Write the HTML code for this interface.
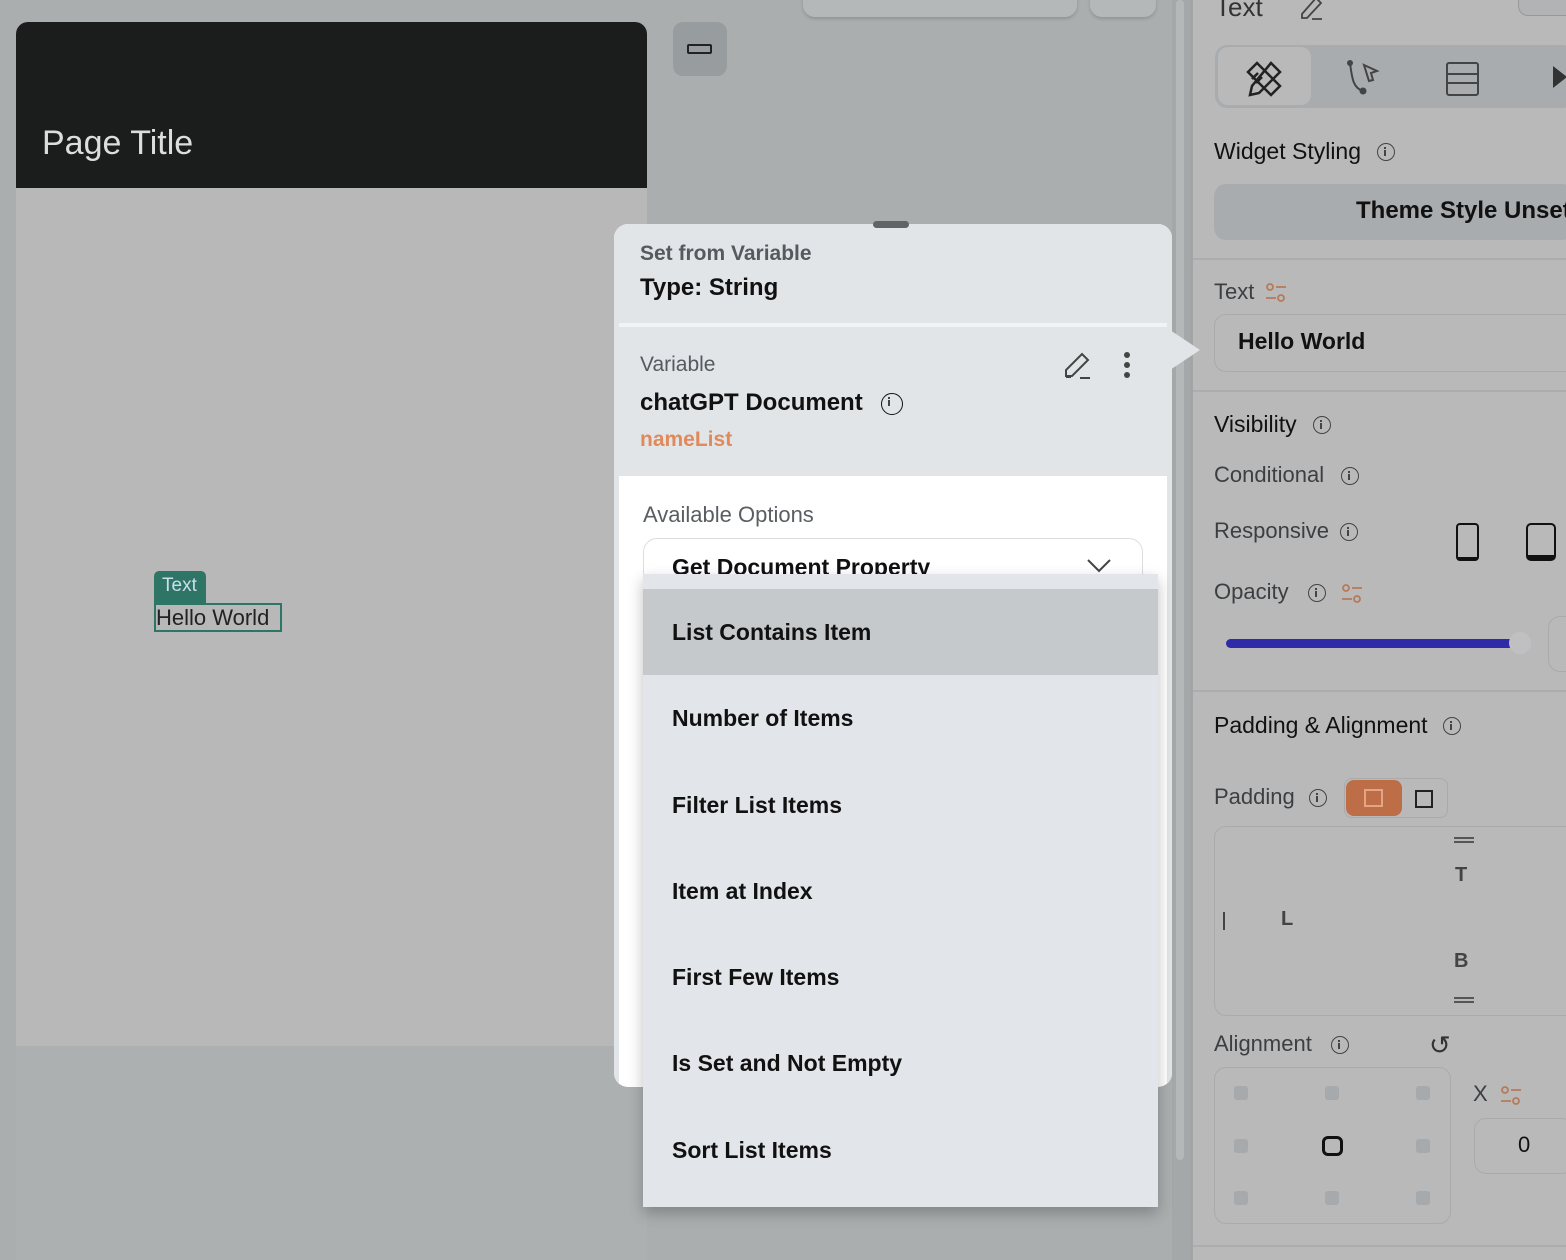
<!DOCTYPE html>
<html><head><meta charset="utf-8"><style>
*{box-sizing:border-box;margin:0;padding:0}
body{width:1566px;height:1260px;overflow:hidden;background:#abaeaf;font-family:"Liberation Sans",sans-serif;position:relative;color:#111}
.a{position:absolute}
.ic{width:18px;height:18px;border:1.8px solid #444;border-radius:50%;display:inline-block;position:absolute}
.ic::before{content:"";position:absolute;left:6px;top:6px;width:2px;height:6px;background:#444}
.ic::after{content:"";position:absolute;left:6px;top:2.5px;width:2px;height:2px;background:#444}
.sl{position:absolute;width:24px;height:24px}
.lbl{font-size:22px;color:#3c3f42}
.menu div{height:86.3px;padding-left:29px;line-height:86px;font-size:23px;font-weight:bold;color:#111}
.dot{width:14px;height:14px;background:#a6aaad;border-radius:3px;position:absolute}
</style></head><body>
<svg width="0" height="0" style="position:absolute"><defs><g id="sl"><circle cx="6" cy="6" r="3" stroke="#b77a58" stroke-width="1.8" fill="none"/><path d="M12 6 H22 M2 17 H12" stroke="#b77a58" stroke-width="1.8"/><circle cx="17" cy="17" r="3" stroke="#b77a58" stroke-width="1.8" fill="none"/></g></defs></svg>
<!-- phone -->
<div class="a" style="left:16px;top:22px;width:631px;height:1238px;background:#b8b8b8;border-radius:12px 12px 0 0;overflow:hidden">
 <div class="a" style="left:0;top:0;width:631px;height:166px;background:#1b1c1c"></div>
 <div class="a" style="left:26px;top:102px;font-size:34px;color:#ddd">Page Title</div>
 <div class="a" style="left:0;top:1024px;width:631px;height:220px;background:#adb0b1"></div>
</div>
<div class="a" style="left:154px;top:571px;width:52px;height:32px;background:#2f7565;border-radius:5px 5px 0 0;color:#cde;font-size:19px;padding:4px 0 0 8px">Text</div>
<div class="a" style="left:154px;top:603px;width:128px;height:29px;border:2px solid #2f7565;font-size:22px;line-height:25px;color:#222">Hello World</div>
<!-- toolbars -->
<div class="a" style="left:803px;top:-20px;width:274px;height:37px;background:#b5b8b9;border-radius:12px;box-shadow:0 2px 3px rgba(0,0,0,.15)"></div>
<div class="a" style="left:1090px;top:-20px;width:66px;height:37px;background:#b5b8b9;border-radius:12px;box-shadow:0 2px 3px rgba(0,0,0,.15)"></div>
<div class="a" style="left:673px;top:22px;width:54px;height:54px;background:#979c9f;border-radius:10px"><div class="a" style="left:14px;top:22px;width:25px;height:10px;border:2px solid #222;border-radius:2px"></div></div>
<!-- scroll strip -->
<div class="a" style="left:1172px;top:0;width:18px;height:1260px;background:#a5a8a9"></div>
<div class="a" style="left:1176px;top:0;width:8px;height:1160px;background:#b5b8b9;border-radius:4px"></div>
<!-- right panel -->
<div class="a" style="left:1190px;top:0;width:376px;height:1260px;background:#b9b9b9;border-left:3px solid #a2a4a5">
 <div class="a" style="left:22px;top:-8px;font-size:26px;color:#333">Text</div>
 <svg class="a" style="left:105px;top:-6px" width="28" height="28"><path d="M4 20 L18 4 L23 9 L9 24 L4 24 Z M14 25 H24" stroke="#444" stroke-width="1.8" fill="none"/></svg>
 <div class="a" style="left:325px;top:-10px;width:60px;height:26px;border:1px solid #999;border-radius:10px;background:#b1b3b4"></div>
 <div class="a" style="left:22px;top:45px;width:360px;height:63px;background:#a9acae;border-radius:12px"></div>
 <div class="a" style="left:25px;top:47px;width:93px;height:58px;background:#b9b9b9;border-radius:10px"></div>
 <svg class="a" style="left:52px;top:60px" width="38" height="38"><g stroke="#222" stroke-width="2.5" fill="none"><path d="M3 12 L12 3 L35 26 L26 35 Z"/><path d="M7 19 L13 13 M11 23 L17 17"/><path d="M26 3 L35 12 L14 33 L5 35 L7 26 Z"/></g></svg>
 <div class="a" style="left:253px;top:62px;width:33px;height:34px;border:2.5px solid #444;border-radius:3px"></div>
 <div class="a" style="left:253px;top:73px;width:33px;height:11px;border-top:2.5px solid #444;border-bottom:2.5px solid #444"></div>
 <svg class="a" style="left:150px;top:58px" width="40" height="40"><circle cx="7" cy="5" r="3" fill="#444"/><circle cx="20" cy="33" r="3.5" fill="#444"/><path d="M7 5 C9 20 10 30 20 33" stroke="#444" stroke-width="2" fill="none"/><path d="M21 7 L34 13 L28 15 L30 22 L26 23 Z" stroke="#444" stroke-width="2" fill="none"/></svg>
 <div class="a" style="left:360px;top:66px;border-left:14px solid #333;border-top:11px solid transparent;border-bottom:11px solid transparent"></div>
 <div class="a" style="left:21px;top:138px;font-size:23px;color:#111">Widget Styling</div><span class="ic" style="left:184px;top:143px"></span>
 <div class="a" style="left:21px;top:184px;width:360px;height:56px;background:#a9acae;border-radius:12px"></div>
 <div class="a" style="left:163px;top:197px;font-size:24px;font-weight:bold;white-space:nowrap">Theme Style Unset</div>
 <div class="a" style="left:0;top:258px;width:376px;height:2px;background:#abadae"></div>
 <div class="a lbl" style="left:21px;top:279px">Text</div>
 <svg class="sl" style="left:71px;top:281px"><use href="#sl"/></svg>
 <div class="a" style="left:21px;top:314px;width:370px;height:58px;border:1.5px solid #aaa;border-radius:12px"></div>
 <div class="a" style="left:45px;top:328px;font-size:23px;font-weight:bold">Hello World</div>
 <div class="a" style="left:0;top:390px;width:376px;height:2px;background:#abadae"></div>
 <div class="a" style="left:21px;top:411px;font-size:23px">Visibility</div><span class="ic" style="left:120px;top:416px"></span>
 <div class="a lbl" style="left:21px;top:462px">Conditional</div><span class="ic" style="left:148px;top:467px"></span>
 <div class="a lbl" style="left:21px;top:518px">Responsive</div><span class="ic" style="left:147px;top:523px"></span>
 <div class="a" style="left:263px;top:523px;width:23px;height:38px;border:2.5px solid #111;border-bottom-width:4px;border-radius:4px"></div>
 <div class="a" style="left:333px;top:523px;width:30px;height:38px;border:2.5px solid #111;border-bottom-width:6px;border-radius:5px"></div>
 <div class="a lbl" style="left:21px;top:579px">Opacity</div><span class="ic" style="left:115px;top:584px"></span>
 <svg class="sl" style="left:147px;top:582px"><use href="#sl"/></svg>
 <div class="a" style="left:33px;top:639px;width:290px;height:9px;background:#2e2aa8;border-radius:5px"></div>
 <div class="a" style="left:316px;top:632px;width:22px;height:22px;background:#c0c0c2;border-radius:50%"></div>
 <div class="a" style="left:355px;top:616px;width:40px;height:56px;border:1.5px solid #aaa;border-radius:12px"></div>
 <div class="a" style="left:0;top:690px;width:376px;height:2px;background:#abadae"></div>
 <div class="a" style="left:21px;top:712px;font-size:23px">Padding &amp; Alignment</div><span class="ic" style="left:250px;top:717px"></span>
 <div class="a lbl" style="left:21px;top:784px">Padding</div><span class="ic" style="left:116px;top:789px"></span>
 <div class="a" style="left:151px;top:778px;width:104px;height:40px;border:1.5px solid #aaa;border-radius:8px"></div>
 <div class="a" style="left:153px;top:780px;width:56px;height:36px;background:#bd6e47;border-radius:8px"><div class="a" style="left:18px;top:9px;width:19px;height:18px;border:2px solid #e3a586"></div></div>
 <div class="a" style="left:222px;top:790px;width:18px;height:18px;border:2px solid #222"></div>
 <div class="a" style="left:21px;top:826px;width:370px;height:190px;border:1.5px solid #aaa;border-radius:12px"></div>
 <div class="a" style="left:261px;top:837px;width:20px;height:6px;border-top:2px solid #555;border-bottom:2px solid #555"></div>
 <div class="a" style="left:262px;top:864px;font-size:20px;font-weight:bold;color:#444">T</div>
 <div class="a" style="left:88px;top:908px;font-size:20px;font-weight:bold;color:#444">L</div>
 <div class="a" style="left:30px;top:912px;width:8px;height:18px;border-left:2px solid #444"></div>
 <div class="a" style="left:261px;top:950px;font-size:20px;font-weight:bold;color:#444">B</div>
 <div class="a" style="left:261px;top:997px;width:20px;height:6px;border-top:2px solid #555;border-bottom:2px solid #555"></div>
 <div class="a lbl" style="left:21px;top:1031px">Alignment</div><span class="ic" style="left:138px;top:1036px"></span>
 <div class="a" style="left:236px;top:1030px;font-size:26px;color:#333">↺</div>
 <div class="a" style="left:21px;top:1067px;width:237px;height:157px;border:1.5px solid #aaa;border-radius:12px"></div>
 <div class="dot" style="left:41px;top:1086px"></div><div class="dot" style="left:132px;top:1086px"></div><div class="dot" style="left:223px;top:1086px"></div>
 <div class="dot" style="left:41px;top:1139px"></div><div class="dot" style="left:223px;top:1139px"></div>
 <div class="dot" style="left:41px;top:1191px"></div><div class="dot" style="left:132px;top:1191px"></div><div class="dot" style="left:223px;top:1191px"></div>
 <div class="a" style="left:129px;top:1136px;width:21px;height:20px;border:3px solid #111;border-radius:6px"></div>
 <div class="a lbl" style="left:280px;top:1081px">X</div>
 <svg class="sl" style="left:306px;top:1084px"><use href="#sl"/></svg>
 <div class="a" style="left:281px;top:1118px;width:100px;height:56px;border:1.5px solid #aaa;border-radius:12px"></div>
 <div class="a" style="left:325px;top:1132px;font-size:22px">0</div>
 <div class="a" style="left:0;top:1245px;width:376px;height:2px;background:#abadae"></div>
</div>
<!-- popup -->
<div class="a" style="left:1170px;top:330px;border-left:30px solid #e2e5e8;border-top:20px solid transparent;border-bottom:20px solid transparent;width:0;height:0"></div>
<div class="a" style="left:614px;top:224px;width:558px;height:863px;background:#fff;border-radius:14px;overflow:hidden">
 <div class="a" style="left:0;top:0;width:558px;height:252px;background:#e2e5e8"></div>
 <div class="a" style="left:5px;top:99px;width:553px;height:4px;background:#f1f3f5"></div>
 <div class="a" style="left:0;top:0;width:5px;height:863px;background:#e2e5e8"></div>
 <div class="a" style="left:553px;top:0;width:5px;height:863px;background:#e2e5e8"></div>
 <div class="a" style="left:26px;top:18px;font-size:21px;font-weight:bold;color:#555a5e">Set from Variable</div>
 <div class="a" style="left:26px;top:50px;font-size:24px;font-weight:bold">Type: String</div>
 <div class="a" style="left:26px;top:129px;font-size:21px;color:#555a5e">Variable</div>
 <div class="a" style="left:26px;top:165px;font-size:24px;font-weight:bold">chatGPT Document</div>
 <span class="ic" style="left:267px;top:169px;width:22px;height:22px;border-color:#111"></span>
 <div class="a" style="left:26px;top:204px;font-size:21px;font-weight:bold;color:#e08a5c">nameList</div>
 <svg class="a" style="left:448px;top:126px" width="32" height="32"><path d="M4 26 L4 20 L20 4 L26 10 L10 26 Z M4 27 H9 M18 28 H28" stroke="#444" stroke-width="2" fill="none"/></svg>
 <svg class="a" style="left:506px;top:126px" width="14" height="30"><circle cx="7" cy="5" r="3" fill="#444"/><circle cx="7" cy="15" r="3" fill="#444"/><circle cx="7" cy="25" r="3" fill="#444"/></svg>
 <div class="a" style="left:29px;top:278px;font-size:22px;color:#5a5e62">Available Options</div>
 <div class="a" style="left:29px;top:314px;width:500px;height:70px;border:1.5px solid #ddd;border-radius:14px"></div>
 <div class="a" style="left:58px;top:330px;font-size:23px;font-weight:bold">Get Document Property</div>
 <svg class="a" style="left:472px;top:334px" width="26" height="16"><path d="M2 2 L13 13 L24 2" stroke="#444" stroke-width="2" fill="none"/></svg>
</div>
<div class="a" style="left:873px;top:221px;width:36px;height:7px;background:#5f6467;border-radius:4px"></div>
<!-- menu -->
<div class="a menu" style="left:643px;top:574px;width:515px;height:633px;background:#e2e5e9;padding-top:15px;box-shadow:0 6px 14px rgba(0,0,0,.25)">
 <div style="background:#c6c9cc">List Contains Item</div>
 <div>Number of Items</div>
 <div>Filter List Items</div>
 <div>Item at Index</div>
 <div>First Few Items</div>
 <div>Is Set and Not Empty</div>
 <div>Sort List Items</div>
</div>
</body></html>
